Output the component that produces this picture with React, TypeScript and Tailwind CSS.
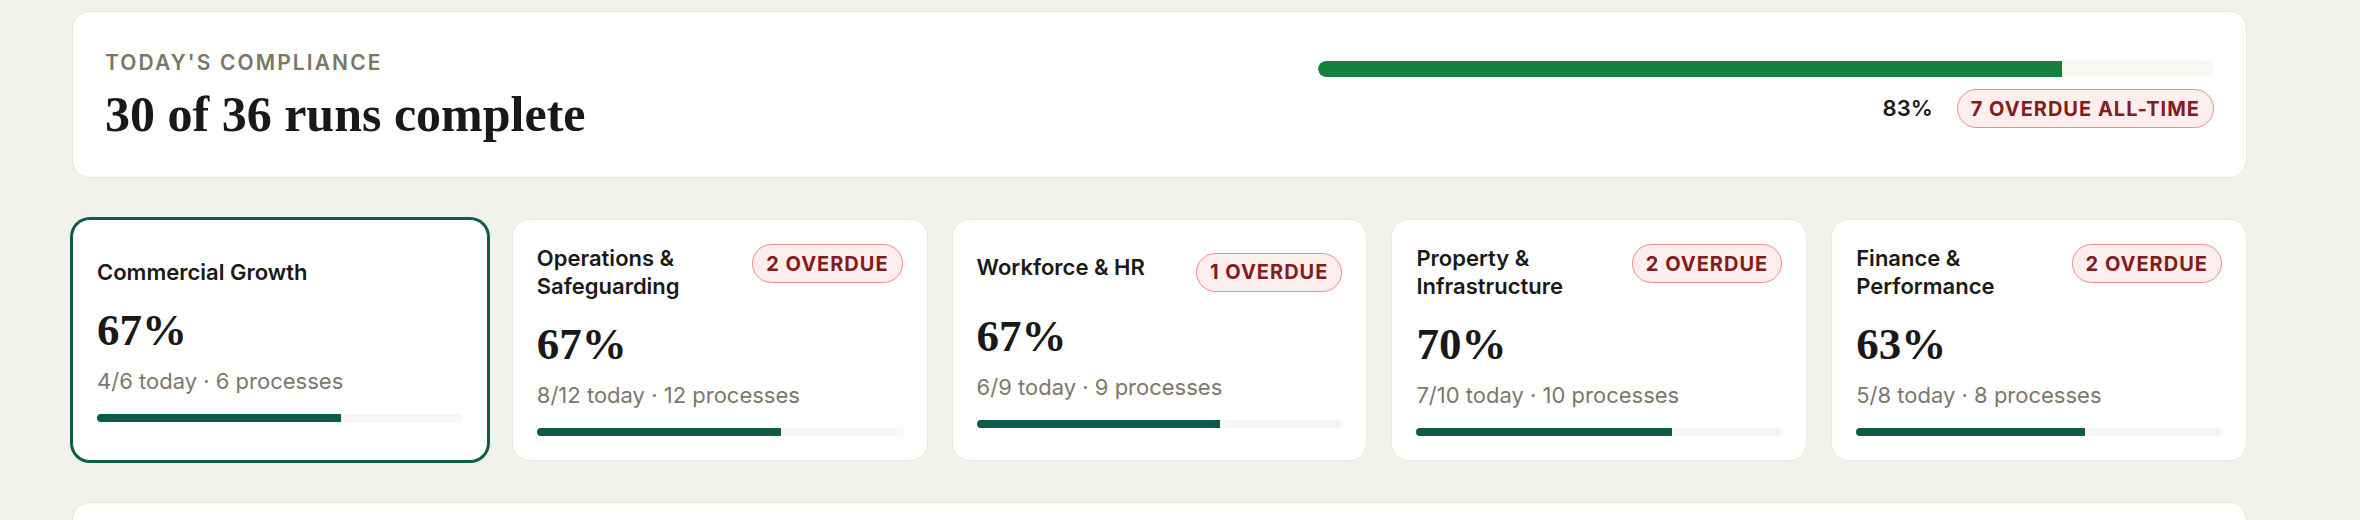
import React from "react";

const sans = { fontFamily: "Inter, 'Noto Sans', sans-serif" };
const serif = { fontFamily: "'Liberation Serif', 'DejaVu Serif', serif" };

type Area = {
  name: string;
  done: number;
  total: number;
  overdue: number;
};

const areas: Area[] = [
  { name: "Commercial Growth", done: 4, total: 6, overdue: 0 },
  { name: "Operations & Safeguarding", done: 8, total: 12, overdue: 2 },
  { name: "Workforce & HR", done: 6, total: 9, overdue: 1 },
  { name: "Property & Infrastructure", done: 7, total: 10, overdue: 2 },
  { name: "Finance & Performance", done: 5, total: 8, overdue: 2 },
];

const Badge = ({ children }: { children: React.ReactNode }) => (
  <span className="shrink-0 h-[39px] px-[13px] flex items-center rounded-full border border-[#ef8b8b] bg-[#fdeeee] text-[#851b1b] text-[20px] font-bold tracking-[0.05em] leading-none whitespace-nowrap">
    {children}
  </span>
);

const AreaCard = ({ area, selected }: { area: Area; selected: boolean }) => {
  const pct = Math.round((area.done / area.total) * 100);
  return (
    <div
      className={
        selected
          ? "bg-white rounded-[18px] border border-[#0e5c48] ring-2 ring-[#0e5c48] p-6 flex flex-col justify-center"
          : "bg-white rounded-[18px] border border-[#ebe8e1] p-6 flex flex-col justify-center"
      }
    >
      <div className="flex items-start justify-between gap-4">
        <div className="text-[22px] leading-[28px] font-semibold text-[#1b1a17]">
          {area.name}
        </div>
        {area.overdue > 0 && <Badge>{area.overdue} OVERDUE</Badge>}
      </div>
      <div
        className="mt-[20px] text-[45px] leading-[48px] font-bold text-[#1a1918]"
        style={serif}
      >
        {pct}%
      </div>
      <div className="mt-[13px] text-[22px] leading-[28px] text-[#7d776b]">
        {area.done}/{area.total} today · {area.total} processes
      </div>
      <div className="mt-[19px] h-2 rounded-full bg-[#f7f6f2] overflow-hidden">
        <div
          className="h-full bg-[#0d5c4a]"
          style={{ width: `${(area.done / area.total) * 100}%` }}
        />
      </div>
    </div>
  );
};

export default function App() {
  return (
    <div className="min-h-screen bg-[#f2f2ed] pt-[11px] pl-[72px]" style={sans}>
      <div className="w-[2175px]">
        <div className="h-[167px] bg-white rounded-[18px] border border-[#e9e6de] px-8 flex items-center justify-between">
          <div>
            <div className="text-[21px] leading-[28px] font-semibold tracking-[0.1em] text-[#7b7668]">
              TODAY'S COMPLIANCE
            </div>
            <div
              className="mt-[10px] text-[50px] leading-[54px] font-bold text-[#1a1918]"
              style={serif}
            >
              30 of 36 runs complete
            </div>
          </div>
          <div className="w-[896px]">
            <div className="h-4 rounded-full bg-[#f8f7f4] overflow-hidden">
              <div className="h-full bg-[#17803f] rounded-l-full" style={{ width: "83%" }} />
            </div>
            <div className="mt-3 flex items-center justify-end gap-6">
              <span className="text-[22px] font-semibold text-[#1a1918]">83%</span>
              <Badge>7 OVERDUE ALL-TIME</Badge>
            </div>
          </div>
        </div>

        <div className="mt-[41px] grid grid-cols-5 gap-6">
          {areas.map((a, i) => (
            <AreaCard key={a.name} area={a} selected={i === 0} />
          ))}
        </div>

        <div className="mt-[41px] h-[120px] bg-white rounded-[18px] border border-[#e9e6de]" />
      </div>
    </div>
  );
}
